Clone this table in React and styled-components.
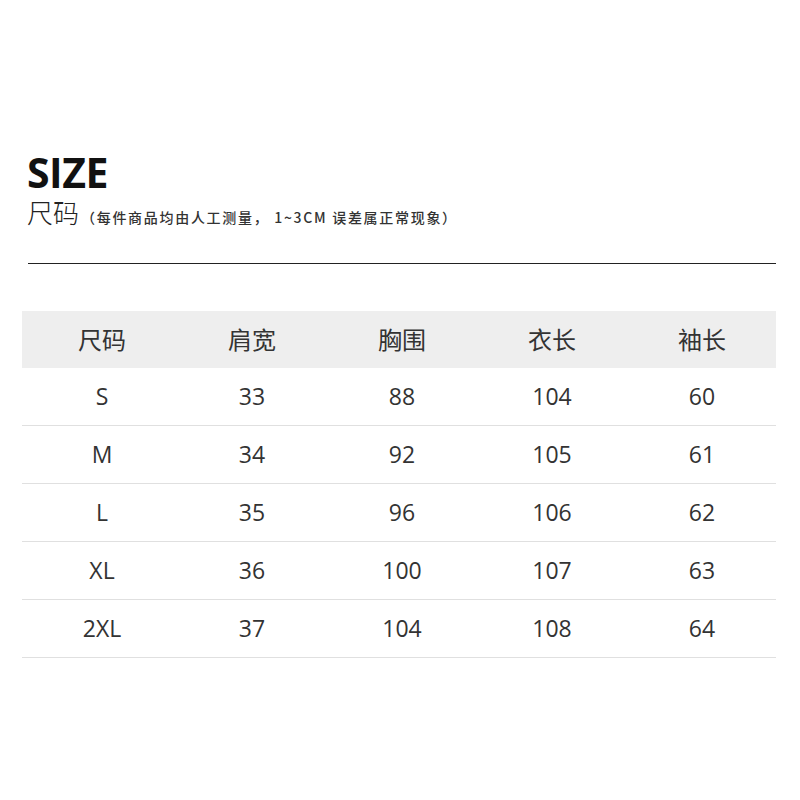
import React from 'react';
import styled, { createGlobalStyle } from 'styled-components';

const columns = ['尺码', '肩宽', '胸围', '衣长', '袖长'];

const rows = [
  ['S', '33', '88', '104', '60'],
  ['M', '34', '92', '105', '61'],
  ['L', '35', '96', '106', '62'],
  ['XL', '36', '100', '107', '63'],
  ['2XL', '37', '104', '108', '64'],
];

const App = () => (
  <Page>
    <GlobalStyle />
    <Header>
      <Title>SIZE</Title>
      <Subtitle>
        尺码<Note>（每件商品均由人工测量， 1~3CM 误差属正常现象）</Note>
      </Subtitle>
    </Header>

    <Divider />

    <Table>
      <HeadRow>
        {columns.map((c) => (
          <HeadCell key={c}>{c}</HeadCell>
        ))}
      </HeadRow>
      {rows.map((r) => (
        <Row key={r[0]}>
          {r.map((v, i) => (
            <Cell key={i}>{v}</Cell>
          ))}
        </Row>
      ))}
    </Table>
  </Page>
);

const GlobalStyle = createGlobalStyle`
  body {
    margin: 0;
    background: #fff;
    font-family: "Open Sans", "Noto Sans CJK SC", sans-serif;
  }
`;

const Page = styled.div`
  width: 800px;
  height: 800px;
  padding-top: 150px;
  box-sizing: border-box;
`;

const Header = styled.div`
  padding-left: 27px;
`;

const Title = styled.h1`
  margin: 0;
  height: 46px;
  color: #111;
  font-size: 41px;
  font-weight: 700;
  line-height: 44px;
  letter-spacing: -0.5px;
`;

const Subtitle = styled.div`
  display: flex;
  align-items: baseline;
  margin-top: 3px;
  color: #222;
  font-size: 26px;
  line-height: 26px;
  font-family: "Noto Sans CJK SC", sans-serif;
  font-weight: 300;
`;

const Note = styled.span`
  margin-left: 2px;
  color: #333;
  font-size: 14px;
  font-weight: 500;
  letter-spacing: 1.7px;
`;

const Divider = styled.div`
  width: 748px;
  height: 1px;
  margin: 33px 0 0 28px;
  background: #222;
`;

const Table = styled.div`
  width: 754px;
  margin: 47px 0 0 22px;
`;

const HeadRow = styled.div`
  display: grid;
  grid-template-columns: repeat(5, 150px);
  height: 57px;
  padding: 0 0 3px 5px;
  box-sizing: border-box;
  align-items: center;
  background: #eeeeee;
`;

const HeadCell = styled.div`
  text-align: center;
  color: #333;
  font-size: 24px;
  font-family: "Noto Sans CJK SC", sans-serif;
`;

const Row = styled.div`
  display: grid;
  grid-template-columns: repeat(5, 150px);
  height: 58px;
  padding: 0 0 1px 5px;
  box-sizing: border-box;
  align-items: center;
  border-bottom: 1px solid #e0e0e0;
`;

const Cell = styled.div`
  text-align: center;
  color: #333;
  font-size: 23px;
`;

export default App;
